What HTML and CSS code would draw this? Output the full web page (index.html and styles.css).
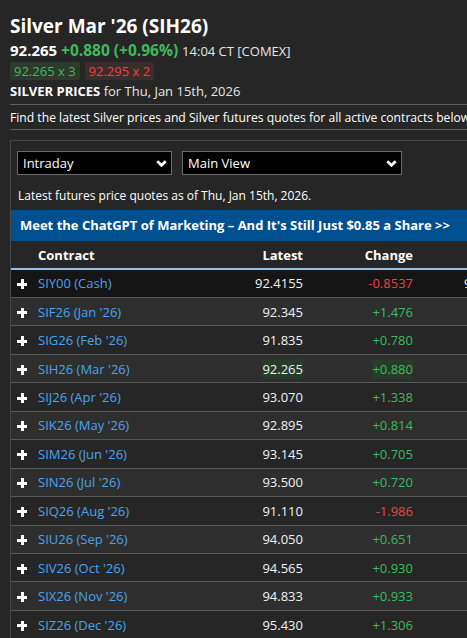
FILE: index.html
```html
<!DOCTYPE html>
<html lang="en">
<head>
<meta charset="utf-8">
<title>Silver Mar '26 (SIH26)</title>
<link rel="stylesheet" href="styles.css">
</head>
<body>
<div class="wrap">
  <h1 class="title">Silver Mar '26 (SIH26)</h1>
  <div class="quote">
    <span class="last">92.265</span>
    <span class="chg up">+0.880 (+0.96%)</span>
    <span class="time">14:04 CT [COMEX]</span>
  </div>
  <div class="badges">
    <span class="badge bid">92.265 x 3</span>
    <span class="badge ask">92.295 x 2</span>
  </div>
  <div class="subhead"><strong>SILVER PRICES</strong> for Thu, Jan 15th, 2026</div>
  <div class="intro">Find the latest Silver prices and Silver futures quotes for all active contracts below.</div>

  <div class="panel">
    <div class="controls">
      <div class="select sel-1"><span>Intraday</span>
        <svg class="chev" width="11" height="7" viewBox="0 0 11 7"><polyline points="1.3,1.3 5.5,5.3 9.7,1.3" fill="none" stroke="#fff" stroke-width="2.8"/></svg>
      </div>
      <div class="select sel-2"><span>Main View</span>
        <svg class="chev" width="11" height="7" viewBox="0 0 11 7"><polyline points="1.3,1.3 5.5,5.3 9.7,1.3" fill="none" stroke="#fff" stroke-width="2.8"/></svg>
      </div>
    </div>
    <div class="asof">Latest futures price quotes as of Thu, Jan 15th, 2026.</div>
    <div class="promo">Meet the ChatGPT of Marketing – And It's Still Just $0.85 a Share &gt;&gt;</div>

    <table class="quotes">
      <thead>
        <tr><th class="c-contract">Contract</th><th class="c-num c-latest">Latest</th><th class="c-num c-change">Change</th><th class="c-num c-high">High</th></tr>
      </thead>
      <tbody>
        <tr class="cash"><td class="c-contract"><span class="plus"></span><a>SIY00 (Cash)</a></td><td class="c-num">92.4155</td><td class="c-num down">-0.8537</td><td class="c-num c-high">92.4155</td></tr>
        <tr><td class="c-contract"><span class="plus"></span><a>SIF26 (Jan '26)</a></td><td class="c-num">92.345</td><td class="c-num up">+1.476</td><td class="c-num c-high">93.480</td></tr>
        <tr><td class="c-contract"><span class="plus"></span><a>SIG26 (Feb '26)</a></td><td class="c-num">91.835</td><td class="c-num up">+0.780</td><td class="c-num c-high">93.000</td></tr>
        <tr><td class="c-contract"><span class="plus"></span><a>SIH26 (Mar '26)</a></td><td class="c-num"><span class="flash">92.265</span></td><td class="c-num up"><span class="flash">+0.880</span></td><td class="c-num c-high">93.700</td></tr>
        <tr><td class="c-contract"><span class="plus"></span><a>SIJ26 (Apr '26)</a></td><td class="c-num">93.070</td><td class="c-num up">+1.338</td><td class="c-num c-high">93.100</td></tr>
        <tr><td class="c-contract"><span class="plus"></span><a>SIK26 (May '26)</a></td><td class="c-num">92.895</td><td class="c-num up">+0.814</td><td class="c-num c-high">94.110</td></tr>
        <tr><td class="c-contract"><span class="plus"></span><a>SIM26 (Jun '26)</a></td><td class="c-num">93.145</td><td class="c-num up">+0.705</td><td class="c-num c-high">93.880</td></tr>
        <tr><td class="c-contract"><span class="plus"></span><a>SIN26 (Jul '26)</a></td><td class="c-num">93.500</td><td class="c-num up">+0.720</td><td class="c-num c-high">94.800</td></tr>
        <tr><td class="c-contract"><span class="plus"></span><a>SIQ26 (Aug '26)</a></td><td class="c-num">91.110</td><td class="c-num down">-1.986</td><td class="c-num c-high">93.096</td></tr>
        <tr><td class="c-contract"><span class="plus"></span><a>SIU26 (Sep '26)</a></td><td class="c-num">94.050</td><td class="c-num up">+0.651</td><td class="c-num c-high">95.220</td></tr>
        <tr><td class="c-contract"><span class="plus"></span><a>SIV26 (Oct '26)</a></td><td class="c-num">94.565</td><td class="c-num up">+0.930</td><td class="c-num c-high">94.565</td></tr>
        <tr><td class="c-contract"><span class="plus"></span><a>SIX26 (Nov '26)</a></td><td class="c-num">94.833</td><td class="c-num up">+0.933</td><td class="c-num c-high">94.833</td></tr>
        <tr><td class="c-contract"><span class="plus"></span><a>SIZ26 (Dec '26)</a></td><td class="c-num">95.430</td><td class="c-num up">+1.306</td><td class="c-num c-high">96.180</td></tr>
      </tbody>
    </table>
  </div>
</div>
</body>
</html>
```
FILE: styles.css
```css
html, body {
  margin: 0;
  padding: 0;
}
body {
  background: #262626;
  color: #fff;
  font-family: "Open Sans", "Liberation Sans", sans-serif;
  overflow: hidden;
}
.wrap {
  width: 720px;
  padding: 13px 0 0 10px;
}
.title {
  margin: 0;
  font-size: 19px;
  line-height: 27px;
  font-weight: 700;
}
.quote {
  height: 20px;
  font-size: 15px;
  line-height: 20px;
  white-space: nowrap;
}
.last {
  font-weight: 700;
}
.chg {
  font-weight: 700;
  font-size: 15.5px;
}
.up { color: #3dba5e; }
.down { color: #eb4343; }
.time {
  font-size: 13px;
  color: #e6e6e6;
}
.badges {
  display: flex;
  gap: 5px;
  margin-top: 2px;
}
.badge {
  font-size: 13px;
  line-height: 18px;
  padding: 0 4px;
  border-radius: 2px;
}
.badge.bid {
  background: #2b3b2e;
  color: #3dba5e;
}
.badge.ask {
  background: #3e2b2b;
  color: #eb4343;
}
.subhead {
  margin-top: 3px;
  font-size: 13px;
  line-height: 16px;
  color: #e6e6e6;
}
.subhead strong {
  color: #fff;
}
.intro {
  margin-top: 5px;
  border-top: 1px solid #5f5f5f;
  border-bottom: 1px solid #5f5f5f;
  padding: 5px 0 3px;
  font-size: 12.15px;
  line-height: 16px;
  white-space: nowrap;
}
.panel {
  margin-top: 10px;
  border-top: 1px solid #474747;
  border-left: 1px solid #474747;
}
.controls {
  display: flex;
  gap: 10px;
  padding: 10px 0 0 6px;
}
.select {
  box-sizing: border-box;
  height: 24px;
  background: #000;
  border: 1px solid #6a6a6a;
  display: flex;
  align-items: center;
  justify-content: space-between;
  padding: 0 4px 0 5px;
  font-size: 13px;
}
.sel-1 { width: 155px; }
.sel-2 { width: 220px; }
.chev { display: block; margin-top: 1px; }
.asof {
  margin-top: 13px;
  padding-left: 7px;
  font-size: 12px;
  line-height: 16px;
}
.promo {
  margin-top: 6px;
  background: #005090;
  height: 31px;
  line-height: 31px;
  padding-left: 9px;
  font-size: 13px;
  font-weight: 700;
  white-space: nowrap;
}
.quotes {
  border-collapse: collapse;
  table-layout: fixed;
  width: 501px;
  font-size: 13px;
}
.quotes th,
.quotes td {
  box-sizing: border-box;
  padding: 0;
  vertical-align: middle;
  white-space: nowrap;
}
.quotes th {
  height: 28px;
  font-weight: 700;
  border-bottom: 2px solid #8cc4ee;
}
.quotes td {
  height: 28.46px;
  border-bottom: 1px solid #575757;
  color: #f2f2f2;
}
.quotes td.up { color: #3dba5e; }
.quotes td.down { color: #eb4343; }
.c-contract {
  width: 229px;
  text-align: left;
}
.quotes th.c-contract { padding-left: 27px; }
.quotes td.c-contract { padding-left: 6px; }
.c-num { text-align: right; }
.c-latest { width: 63px; }
.c-change { width: 110px; }
.c-high { width: 99px; }
tbody tr:nth-child(even) td { background: #2e2e2e; }
tbody tr:nth-child(odd) td { background: #262626; }
tbody tr.cash td { background: #151515; }
.plus {
  display: inline-block;
  position: relative;
  width: 10px;
  height: 10px;
  margin-right: 11px;
  vertical-align: -1px;
}
.plus::before, .plus::after {
  content: "";
  position: absolute;
  background: #fff;
}
.plus::before { left: 0; top: 3.5px; width: 10px; height: 3px; }
.plus::after { left: 3.5px; top: 0; width: 3px; height: 10px; }
.quotes a {
  color: #4aa3ef;
  text-decoration: none;
}
.flash {
  background: #263b29;
  padding: 1px 0;
}
```
